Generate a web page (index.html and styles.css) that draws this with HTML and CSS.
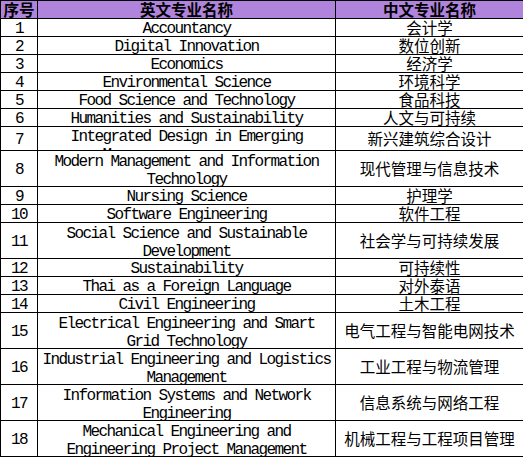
FILE: index.html
```html
<!DOCTYPE html>
<html lang="zh">
<head>
<meta charset="utf-8">
<title>专业列表</title>
<link rel="stylesheet" href="styles.css">
</head>
<body>
<table class="majors">
  <colgroup><col class="c-no"><col class="c-en"><col class="c-zh"></colgroup>
  <thead>
    <tr><th>序号</th><th>英文专业名称</th><th>中文专业名称</th></tr>
  </thead>
  <tbody>
    <tr><td class="num">1</td><td class="en">Accountancy</td><td class="zh">会计学</td></tr>
    <tr><td class="num">2</td><td class="en">Digital Innovation</td><td class="zh">数位创新</td></tr>
    <tr><td class="num">3</td><td class="en">Economics</td><td class="zh">经济学</td></tr>
    <tr><td class="num">4</td><td class="en">Environmental Science</td><td class="zh">环境科学</td></tr>
    <tr><td class="num">5</td><td class="en">Food Science and Technology</td><td class="zh">食品科技</td></tr>
    <tr><td class="num">6</td><td class="en">Humanities and Sustainability</td><td class="zh">人文与可持续</td></tr>
    <tr class="mid"><td class="num">7</td><td class="en en-box"><div class="clip">Integrated Design in Emerging<br>Macro economy sources</div></td><td class="zh">新兴建筑综合设计</td></tr>
    <tr class="tall"><td class="num">8</td><td class="en en-box"><div class="pair">Modern Management and Information<br>Technology</div></td><td class="zh">现代管理与信息技术</td></tr>
    <tr><td class="num">9</td><td class="en">Nursing Science</td><td class="zh">护理学</td></tr>
    <tr><td class="num">10</td><td class="en">Software Engineering</td><td class="zh">软件工程</td></tr>
    <tr class="tall"><td class="num">11</td><td class="en en-box"><div class="pair">Social Science and Sustainable<br>Development</div></td><td class="zh">社会学与可持续发展</td></tr>
    <tr><td class="num">12</td><td class="en">Sustainability</td><td class="zh">可持续性</td></tr>
    <tr><td class="num">13</td><td class="en">Thai as a Foreign Language</td><td class="zh">对外泰语</td></tr>
    <tr><td class="num">14</td><td class="en">Civil Engineering</td><td class="zh">土木工程</td></tr>
    <tr class="tall"><td class="num">15</td><td class="en en-box"><div class="pair">Electrical Engineering and Smart<br>Grid Technology</div></td><td class="zh">电气工程与智能电网技术</td></tr>
    <tr class="tall"><td class="num">16</td><td class="en en-box"><div class="pair">Industrial Engineering and Logistics<br>Management</div></td><td class="zh">工业工程与物流管理</td></tr>
    <tr class="tall"><td class="num">17</td><td class="en en-box"><div class="pair">Information Systems and Network<br>Engineering</div></td><td class="zh">信息系统与网络工程</td></tr>
    <tr class="tall"><td class="num">18</td><td class="en en-box"><div class="pair">Mechanical Engineering and<br>Engineering Project Management</div></td><td class="zh">机械工程与工程项目管理</td></tr>
  </tbody>
</table>
</body>
</html>
```

FILE: styles.css
```css
html, body {
  margin: 0;
  padding: 0;
  background: #ffffff;
}

.majors {
  border-collapse: collapse;
  table-layout: fixed;
  width: 523px;
  color: #000000;
}

.c-no { width: 37px; }
.c-en { width: 298px; }
.c-zh { width: 188px; }

.majors tr { height: 18px; }
.majors tr.mid { height: 24px; }
.majors tr.tall { height: 36px; }

.majors th,
.majors td {
  border: 1px solid #000000;
  padding: 0;
  line-height: 17px;
  text-align: center;
  vertical-align: middle;
  white-space: nowrap;
}

.majors th {
  background: #b084dc;
  font-family: "Noto Sans CJK SC", sans-serif;
  font-weight: 700;
  font-size: 15.5px;
}

.majors .num,
.majors .en {
  font-family: "Liberation Mono", monospace;
  font-size: 16px;
  letter-spacing: -1.6px;
  padding-top: 3px;
  line-height: 14px;
}

.majors .en-box {
  padding-top: 0;
  line-height: 18px;
}

.majors .zh {
  font-family: "Noto Sans CJK SC", sans-serif;
  font-size: 15.5px;
}

.pair {
  height: 35px;
  padding-top: 2px;
  box-sizing: border-box;
}

.clip {
  height: 23px;
  padding-top: 1px;
  box-sizing: border-box;
  overflow: hidden;
}
```
